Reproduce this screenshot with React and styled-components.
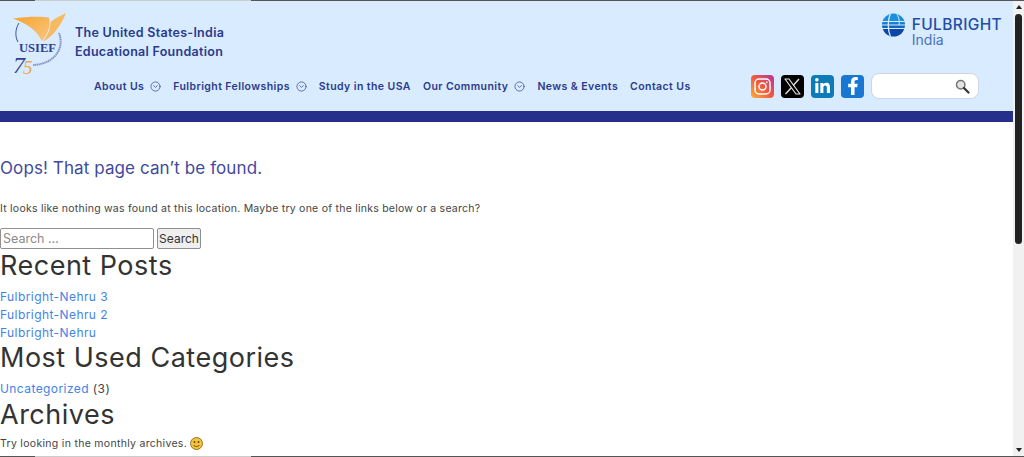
import React from "react";
import styled, { createGlobalStyle } from "styled-components";
import { CircleChevronDown } from "lucide-react";
import { FaLinkedinIn, FaFacebookF } from "react-icons/fa";

const FONT = `"Inter", "Liberation Sans", sans-serif`;

const navItems = [
  { label: "About Us", caret: true },
  { label: "Fulbright Fellowships", caret: true },
  { label: "Study in the USA" },
  { label: "Our Community", caret: true },
  { label: "News & Events" },
  { label: "Contact Us" },
];

const posts = ["Fulbright-Nehru 3", "Fulbright-Nehru 2", "Fulbright-Nehru"];

function UsiefLogo() {
  return (
    <svg width="56" height="64" viewBox="0 0 56 64" aria-hidden="true">
      <defs>
        <linearGradient id="wing" x1="0" y1="0" x2="1" y2="1">
          <stop offset="0" stopColor="#f6a42e" />
          <stop offset="1" stopColor="#f9c680" />
        </linearGradient>
      </defs>
      <path d="M1 5.500 C14 3.500 28 3 37 4.500 C39 12 36 21 30 28 C26 19 15 10 1 5.500Z" fill="url(#wing)" />
      <path d="M54 0 C48 3 42 6 38.500 9 C38.500 17 35 23 31 28.500 C41 24 49 12 54 0Z" fill="#f8b95f" />
      <path d="M7 10 C3 16 3 24 6 29" fill="none" stroke="#3b4f9e" strokeWidth="1" />
      <path d="M47 20 C53 36 42 51 21 52" fill="none" stroke="#8593c8" strokeWidth="2" strokeDasharray="1.500 .5" />
      <text x="7" y="39" fontFamily="Liberation Serif, serif" fontWeight="700" fontSize="13" fill="#2f3f92" textLength="37" lengthAdjust="spacingAndGlyphs">USIEF</text>
      <text x="1" y="60" fontFamily="Liberation Serif, serif" fontStyle="italic" fontSize="24" fill="#2f3f92">7</text>
      <text x="11" y="61" fontFamily="Liberation Serif, serif" fontStyle="italic" fontSize="19" fill="#f0a850">5</text>
    </svg>
  );
}

function GlobeLogo() {
  return (
    <svg width="23" height="24" viewBox="0 0 23 24" aria-hidden="true">
      <defs>
        <clipPath id="globe">
          <circle cx="11.500" cy="12" r="11.500" />
        </clipPath>
      </defs>
      <g clipPath="url(#globe)">
        <rect x="0" y="0" width="23" height="8" fill="#1a8fdc" />
        <rect x="0" y="9" width="23" height="2.500" fill="#1a7fd0" />
        <rect x="0" y="12.500" width="23" height="2.500" fill="#1266c0" />
        <rect x="0" y="16" width="23" height="8" fill="#0a46a8" />
        <path d="M8.500 0C5.500 8 5.500 16 8.500 24" fill="none" stroke="#d8ebff" strokeWidth="1.300" />
        <path d="M14.500 0C17.500 6 17.500 9 17 12" fill="none" stroke="#d8ebff" strokeWidth="1" />
      </g>
    </svg>
  );
}

function InstagramIcon() {
  return (
    <svg width="17" height="17" viewBox="0 0 17 17" fill="none" stroke="#fff" strokeWidth="1.500" aria-hidden="true">
      <rect x="1" y="1" width="15" height="15" rx="4" />
      <circle cx="8.500" cy="8.500" r="3.500" />
      <circle cx="12.800" cy="4.200" r=".6" fill="#fff" strokeWidth=".5" />
    </svg>
  );
}

function XIcon() {
  return (
    <svg width="19" height="19" viewBox="0 0 19 19" fill="none" stroke="#e2e2e2" aria-hidden="true">
      <path d="M2 2h4l11 15h-4Z" strokeWidth="1.200" strokeLinejoin="round" />
      <path d="M16 2l-5.800 6.500M8.300 10.800 2.500 17" strokeWidth="1.400" />
    </svg>
  );
}

function MagnifierIcon() {
  return (
    <svg width="15" height="15" viewBox="0 0 15 15" aria-hidden="true">
      <circle cx="5.700" cy="5.700" r="4.200" fill="#e4e4e4" stroke="#777" strokeWidth="1.500" />
      <path d="M9 9l4.500 4.500" stroke="#333" strokeWidth="2.200" strokeLinecap="round" />
    </svg>
  );
}

function SmileIcon() {
  return (
    <svg width="13" height="13" viewBox="0 0 13 13" aria-hidden="true">
      <circle cx="6.500" cy="6.500" r="6" fill="#f5c33b" stroke="#7a5a10" strokeWidth=".8" />
      <circle cx="4.500" cy="5" r=".9" fill="#5a4208" />
      <circle cx="8.500" cy="5" r=".9" fill="#5a4208" />
      <path d="M3.500 8c1.500 2 4.500 2 6 0" fill="none" stroke="#5a4208" strokeWidth=".9" />
    </svg>
  );
}

export default function App() {
  return (
    <>
      <GlobalStyle />
      <Viewport>
        <Page>
          <Header>
            <TopRow>
              <Brand>
                <UsiefLogo />
                <OrgName>
                  The United States-India
                  <br />
                  Educational Foundation
                </OrgName>
              </Brand>
              <Fulbright>
                <GlobeLogo />
                <FulbrightText>
                  <strong>FULBRIGHT</strong>
                  <span>India</span>
                </FulbrightText>
              </Fulbright>
            </TopRow>
            <NavRow>
              <Nav>
                {navItems.map((item) => (
                  <NavItem key={item.label}>
                    {item.label}
                    {item.caret && <CircleChevronDown size={11} strokeWidth={1.500} />}
                  </NavItem>
                ))}
              </Nav>
              <Socials>
                <SocialTile $bg="linear-gradient(45deg, #f9b233 0%, #f4573f 50%, #b5359e 100%)">
                  <InstagramIcon />
                </SocialTile>
                <SocialTile $bg="#000">
                  <XIcon />
                </SocialTile>
                <SocialTile $bg="#0f7ab8">
                  <FaLinkedinIn size={17} />
                </SocialTile>
                <SocialTile $bg="#1877d2">
                  <FaFacebookF size={18} />
                </SocialTile>
                <HeaderSearch>
                  <MagnifierIcon />
                </HeaderSearch>
              </Socials>
            </NavRow>
          </Header>
          <Rule />
          <Content>
            <PageTitle>Oops! That page can’t be found.</PageTitle>
            <Notice>It looks like nothing was found at this location. Maybe try one of the links below or a search?</Notice>
            <SearchForm>
              <SearchInput placeholder="Search …" />
              <SearchButton type="button">Search</SearchButton>
            </SearchForm>
            <WidgetTitle>Recent Posts</WidgetTitle>
            <LinkList>
              {posts.map((post) => (
                <li key={post}>
                  <TextLink>{post}</TextLink>
                </li>
              ))}
            </LinkList>
            <WidgetTitle $tight>Most Used Categories</WidgetTitle>
            <LinkList>
              <li>
                <TextLink>Uncategorized</TextLink> (3)
              </li>
            </LinkList>
            <WidgetTitle>Archives</WidgetTitle>
            <ArchiveNote>
              Try looking in the monthly archives. <SmileIcon />
            </ArchiveNote>
          </Content>
        </Page>
        <Scrollbar>
          <Arrow $up />
          <Thumb />
          <Track />
          <Arrow />
        </Scrollbar>
      </Viewport>
    </>
  );
}

const GlobalStyle = createGlobalStyle`
  html, body {
    margin: 0;
    height: 100%;
    overflow: hidden;
    background: #fff;
  }
  body {
    font-family: ${FONT};
  }
`;

const Viewport = styled.div`
  display: flex;
  height: 457px;
  width: 1024px;
  box-sizing: border-box;
  border-top: 1px solid #444;
  border-bottom: 1px solid #555;
  border-image: linear-gradient(90deg, #555 36px, #ccc 36px, #ccc 252px, #555 252px) 1;
  border-left: 0;
  border-right: 0;
`;

const Page = styled.main`
  flex: 1;
  min-width: 0;
  overflow: hidden;
`;

const Header = styled.header`
  background: #d8ebff;
  height: 110px;
  display: flex;
  flex-direction: column;
  box-sizing: border-box;
  padding: 12px 11px 0 12px;
`;

const TopRow = styled.div`
  display: flex;
  justify-content: space-between;
  align-items: flex-start;
  height: 60px;
`;

const Brand = styled.div`
  display: flex;
  align-items: flex-start;
  gap: 7px;
  height: 60px;
`;

const OrgName = styled.div`
  color: #2c3a8c;
  font-size: 12.500px;
  font-weight: 600;
  line-height: 19px;
  letter-spacing: 0.280px;
  margin-top: 10px;
`;

const Fulbright = styled.div`
  display: flex;
  align-items: flex-start;
  gap: 7px;
`;

const FulbrightText = styled.div`
  display: flex;
  flex-direction: column;
  color: #1f4fa8;
  margin-top: 4px;

  strong {
    font-size: 15.500px;
    font-weight: 500;
    line-height: 16px;
    letter-spacing: 0.350px;
  }
  span {
    font-size: 14px;
    line-height: 14px;
    color: #4a72b8;
  }
`;

const NavRow = styled.div`
  display: flex;
  align-items: center;
  justify-content: space-between;
  padding-left: 82px;
  padding-right: 23px;
`;

const Nav = styled.nav`
  display: flex;
  gap: 12px;
`;

const NavItem = styled.span`
  display: inline-flex;
  align-items: center;
  gap: 6px;
  color: #2c3a8c;
  font-size: 10.500px;
  font-weight: 600;
  letter-spacing: 0.420px;
  white-space: nowrap;
`;

const Socials = styled.div`
  display: flex;
  align-items: center;
  gap: 7px;
`;

const SocialTile = styled.span`
  width: 23px;
  height: 23px;
  border-radius: 4px;
  background: ${(p) => p.$bg};
  color: #fff;
  display: flex;
  align-items: center;
  justify-content: center;
`;

const HeaderSearch = styled.div`
  width: 108px;
  height: 26px;
  box-sizing: border-box;
  background: #fff;
  border: 1px solid #ccd5e0;
  border-radius: 8px;
  display: flex;
  align-items: center;
  justify-content: flex-end;
  padding-right: 8px;
`;

const Rule = styled.div`
  height: 11px;
  background: #26308a;
`;

const Content = styled.div`
  color: #444;
  font-size: 10.500px;
`;

const PageTitle = styled.h1`
  margin: 37px 0 0;
  font-size: 17px;
  line-height: 19px;
  font-weight: 400;
  color: #3f4a9c;
  letter-spacing: 0.100px;
`;

const Notice = styled.p`
  margin: 24px 0 0;
  line-height: 14px;
  letter-spacing: 0.240px;
`;

const SearchForm = styled.form`
  display: flex;
  align-items: stretch;
  gap: 3px;
  margin-top: 12px;
`;

const SearchInput = styled.input`
  width: 154px;
  height: 21px;
  box-sizing: border-box;
  padding: 0 2px;
  border: 1px solid #8f8f8f;
  border-radius: 2px;
  font-family: ${FONT};
  font-size: 12.500px;
  &::placeholder {
    color: #8a8a8a;
  }
`;

const SearchButton = styled.button`
  width: 44px;
  height: 21px;
  box-sizing: border-box;
  padding: 0;
  border: 1px solid #8f8f8f;
  border-radius: 2px;
  background: #efefef;
  color: #333;
  font-family: ${FONT};
  font-size: 12px;
`;

const WidgetTitle = styled.h2`
  margin: ${(p) => (p.$tight ? "-1px" : "0")} 0 0;
  font-size: 27px;
  line-height: 34px;
  font-weight: 400;
  letter-spacing: 0.500px;
  color: #333;
`;

const LinkList = styled.ul`
  list-style: none;
  margin: 5px 0 0;
  padding: 0;
  font-size: 12px;
  line-height: 18px;
  letter-spacing: 0.420px;
`;

const TextLink = styled.a`
  color: #3f83e8;
`;

const ArchiveNote = styled.p`
  margin: 4px 0 0;
  line-height: 15px;
  letter-spacing: 0.300px;
  display: flex;
  align-items: center;
  gap: 3px;
`;

const Scrollbar = styled.aside`
  width: 11px;
  flex: none;
  background: #f1f1f1;
  display: flex;
  flex-direction: column;
  align-items: center;
`;

const Arrow = styled.div`
  width: 0;
  height: 0;
  margin: 4px 0;
  border-left: 3px solid transparent;
  border-right: 3px solid transparent;
  ${(p) => (p.$up ? "border-bottom: 4px solid #222;" : "border-top: 4px solid #222;")}
`;

const Thumb = styled.div`
  width: 7px;
  height: 230px;
  border-radius: 4px;
  background: #222;
  margin-top: 1px;
`;

const Track = styled.div`
  flex: 1;
`;
